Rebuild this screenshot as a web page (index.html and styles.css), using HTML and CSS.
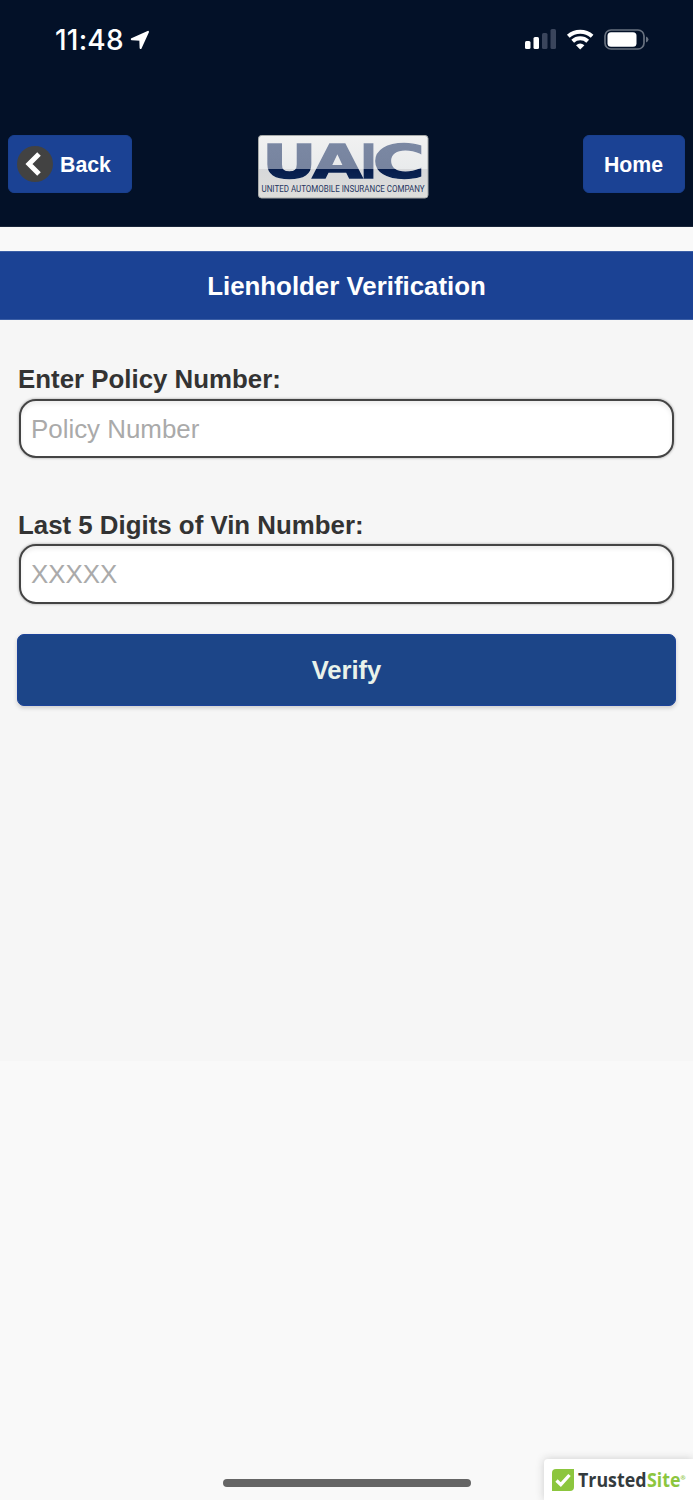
FILE: index.html
```
<!DOCTYPE html>
<html lang="en">
<head>
<meta charset="utf-8">
<title>Lienholder Verification</title>
<link rel="stylesheet" href="styles.css">
</head>
<body>
<header class="top">
  <div class="status">
    <div class="status-left">
      <span class="time">11:48</span>
      <svg class="location" width="20" height="20" viewBox="0 0 20 20"><path d="M18 1.800 10.600 18l-.3-8.300L1.800 9.200z" fill="#fff" stroke="#fff" stroke-width="2" stroke-linejoin="round"/></svg>
    </div>
    <div class="status-right">
      <svg width="33" height="22" viewBox="0 0 33 22"><g fill="#fff"><rect x="0" y="12" width="5.500" height="8" rx="1.500"/><rect x="8.500" y="8" width="5.500" height="12" rx="1.500"/></g><g fill="#3a455c"><rect x="17" y="4" width="5.500" height="16" rx="1.500"/><rect x="25.500" y="0" width="5.500" height="20" rx="1.500"/></g></svg>
      <svg width="28" height="22" viewBox="0 0 28 22"><g fill="none" stroke="#fff" stroke-width="4"><path d="M1.300 7.200a17.800 17.800 0 0 1 23.800 0"/><path d="M5.700 12.200a11 11 0 0 1 15 0"/></g><path d="M13.200 20.500l-4.200-4.300q4.200-3.500 8.400 0z" fill="#fff"/></svg>
      <svg width="46" height="22" viewBox="0 0 46 22"><rect x="1" y="1" width="39" height="19" rx="6" fill="none" stroke="#68717f" stroke-width="1.700"/><rect x="3.500" y="3.300" width="29" height="14.500" rx="3.500" fill="#fff"/><path d="M42 7.500q2.500 1 2.500 3t-2.500 3z" fill="#68717f"/></svg>
    </div>
  </div>
  <nav class="nav">
    <button class="nav-btn back">
      <svg width="36" height="36" viewBox="0 0 36 36"><circle cx="18" cy="18" r="18" fill="#424242"/><path d="M22 8 12 18l10 10" fill="none" stroke="#fff" stroke-width="5"/></svg>
      <span>Back</span>
    </button>
    <svg class="logo" width="172" height="65" viewBox="0 0 172 65">
      <defs>
        <linearGradient id="plate" x1="0" y1="0" x2="0" y2="1"><stop offset="0" stop-color="#f1f1f1"/><stop offset=".54" stop-color="#e9ebec"/><stop offset=".54" stop-color="#d7d8da"/><stop offset="1" stop-color="#dededb"/></linearGradient>
        <linearGradient id="ink" gradientUnits="userSpaceOnUse" x1="0" y1="-35" x2="0" y2="0"><stop offset="0" stop-color="#7b88a3"/><stop offset=".75" stop-color="#77849f"/><stop offset=".75" stop-color="#061c4b"/><stop offset="1" stop-color="#0a2352"/></linearGradient>
      </defs>
      <rect x="1.500" y="1.500" width="169.500" height="62.500" rx="3" fill="url(#plate)" stroke="#a7aaa9"/>
      <g class="brand" transform="translate(0 43.700)" fill="url(#ink)" stroke="url(#ink)">
        <text x="5.200" textLength="54.200" lengthAdjust="spacingAndGlyphs">U</text>
        <text x="55.200" textLength="50.200" lengthAdjust="spacingAndGlyphs">A</text>
        <text x="103.200" textLength="16.600" lengthAdjust="spacingAndGlyphs">I</text>
        <text x="115.800" textLength="52" lengthAdjust="spacingAndGlyphs">C</text>
      </g>
      <text class="company" x="4.500" y="58" textLength="163" lengthAdjust="spacingAndGlyphs">UNITED AUTOMOBILE INSURANCE COMPANY</text>
    </svg>
    <button class="nav-btn home">Home</button>
  </nav>
</header>
<main class="page">
  <h1 class="title">Lienholder Verification</h1>
  <form class="form">
    <label class="label" for="policy">Enter Policy Number:</label>
    <input class="field" id="policy" placeholder="Policy Number">
    <label class="label second" for="vin">Last 5 Digits of Vin Number:</label>
    <input class="field vin" id="vin" placeholder="XXXXX">
    <button class="verify" type="button">Verify</button>
  </form>
</main>
<div class="home-bar"></div>
<aside class="trusted">
  <svg width="22" height="22" viewBox="0 0 22 22"><path d="M4 0h18v18q0 4-4 4H0V4q0-4 4-4z" fill="#8cc63e"/><path d="m4.500 11.500 4.300 4.200L17.500 6" fill="none" stroke="#fff" stroke-width="3.300"/></svg>
  <svg class="trusted-name" width="110" height="26" viewBox="0 0 110 26"><text x="0" y="20" textLength="68.500" lengthAdjust="spacingAndGlyphs" fill="#343b3e">Trusted</text><text x="69" y="20" textLength="33.500" lengthAdjust="spacingAndGlyphs" fill="#8cc63e">Site</text><text class="reg" x="102.600" y="13" fill="#8cc63e">®</text></svg>
</aside>
</body>
</html>
```
FILE: styles.css
```
* { box-sizing: border-box; }
body {
  margin: 0;
  height: 1500px;
  overflow: hidden;
  background: #f9f9f9;
  font-family: "Liberation Sans", Arial, sans-serif;
  color: #333;
}
button { font-family: inherit; font-weight: bold; }
svg { overflow: visible; flex: none; }
.top { height: 227px; background: #031128; border-bottom: 1px solid #1a263a; }
.status {
  height: 80px;
  padding: 0 43px 0 55px;
  display: flex;
  justify-content: space-between;
  align-items: center;
}
.status-left, .status-right { display: flex; align-items: center; }
.status-left { gap: 6px; }
.status-right { gap: 9px; }
.time { font: 500 28px/32px Inter, sans-serif; color: #fff; letter-spacing: .2px; }
.nav {
  display: grid;
  grid-template-columns: 124px 172px 102px;
  justify-content: space-between;
  align-items: start;
  padding: 54px 8px 0;
}
.nav-btn {
  height: 58px;
  margin-top: 1px;
  border: 1px solid #19408f;
  border-radius: 6px;
  background: #1b4294;
  color: #fff;
  font-size: 21.3px;
  padding: 3px 0 0;
  display: flex;
  align-items: center;
  justify-content: center;
}
.back { justify-content: flex-start; gap: 7px; padding-left: 8px; }
.back svg { margin-top: -3px; }
.home { padding-right: 1px; }
.logo { margin-left: -15px; }
.brand { font: bold 47px "DejaVu Sans", sans-serif; stroke-width: 1.5px; filter: drop-shadow(0 0 .7px #fff); }
.company { font: 400 9.7px Roboto, sans-serif; fill: #1f3560; }
.page { margin-top: 24px; height: 810px; background: #f6f6f6; }
.title {
  margin: 0;
  height: 69px;
  border-top: 1px solid #3c5fa6;
  border-bottom: 1px solid #3c5fa6;
  background: #1b4294;
  color: #fff;
  font-size: 25.85px;
  line-height: 69px;
  text-align: center;
}
.form { display: flex; flex-direction: column; padding: 44px 17px 0; }
.label { font-size: 25.85px; line-height: 30px; font-weight: bold; margin-left: 1px; }
.second { margin-top: 52px; }
.field {
  height: 59px;
  margin: 5px 2px 0;
  padding: 1px 10px 0;
  border: 2px solid #444;
  border-radius: 17px;
  background: #fff;
  box-shadow: 0 0 2px 1px #ccc, inset 0 3px 4px #eee;
  font: 25.9px "Liberation Sans", Arial, sans-serif;
}
.field::placeholder { color: #aaa; opacity: 1; }
.vin { height: 60px; margin-top: 4px; }
.verify {
  height: 72px;
  margin-top: 30px;
  padding: 1px 0 0;
  border: 1px solid #1c439a;
  border-radius: 7px;
  background: #1c4588;
  color: #e9f2ea;
  font-size: 25.6px;
  box-shadow: 0 2px 4px #ccc;
}
.home-bar {
  position: absolute;
  top: 1479px;
  left: 223px;
  width: 248px;
  height: 8px;
  border-radius: 4px;
  background: #656565;
}
.trusted {
  position: absolute;
  right: 0;
  bottom: 0;
  width: 149px;
  height: 41px;
  padding-left: 8px;
  border-radius: 4px 0 0;
  background: #fff;
  box-shadow: 0 0 8px #ccc;
  display: flex;
  align-items: center;
  gap: 4px;
}
.trusted-name { font: bold 19px "Open Sans", sans-serif; }
.reg { font-size: 6px; }
```
